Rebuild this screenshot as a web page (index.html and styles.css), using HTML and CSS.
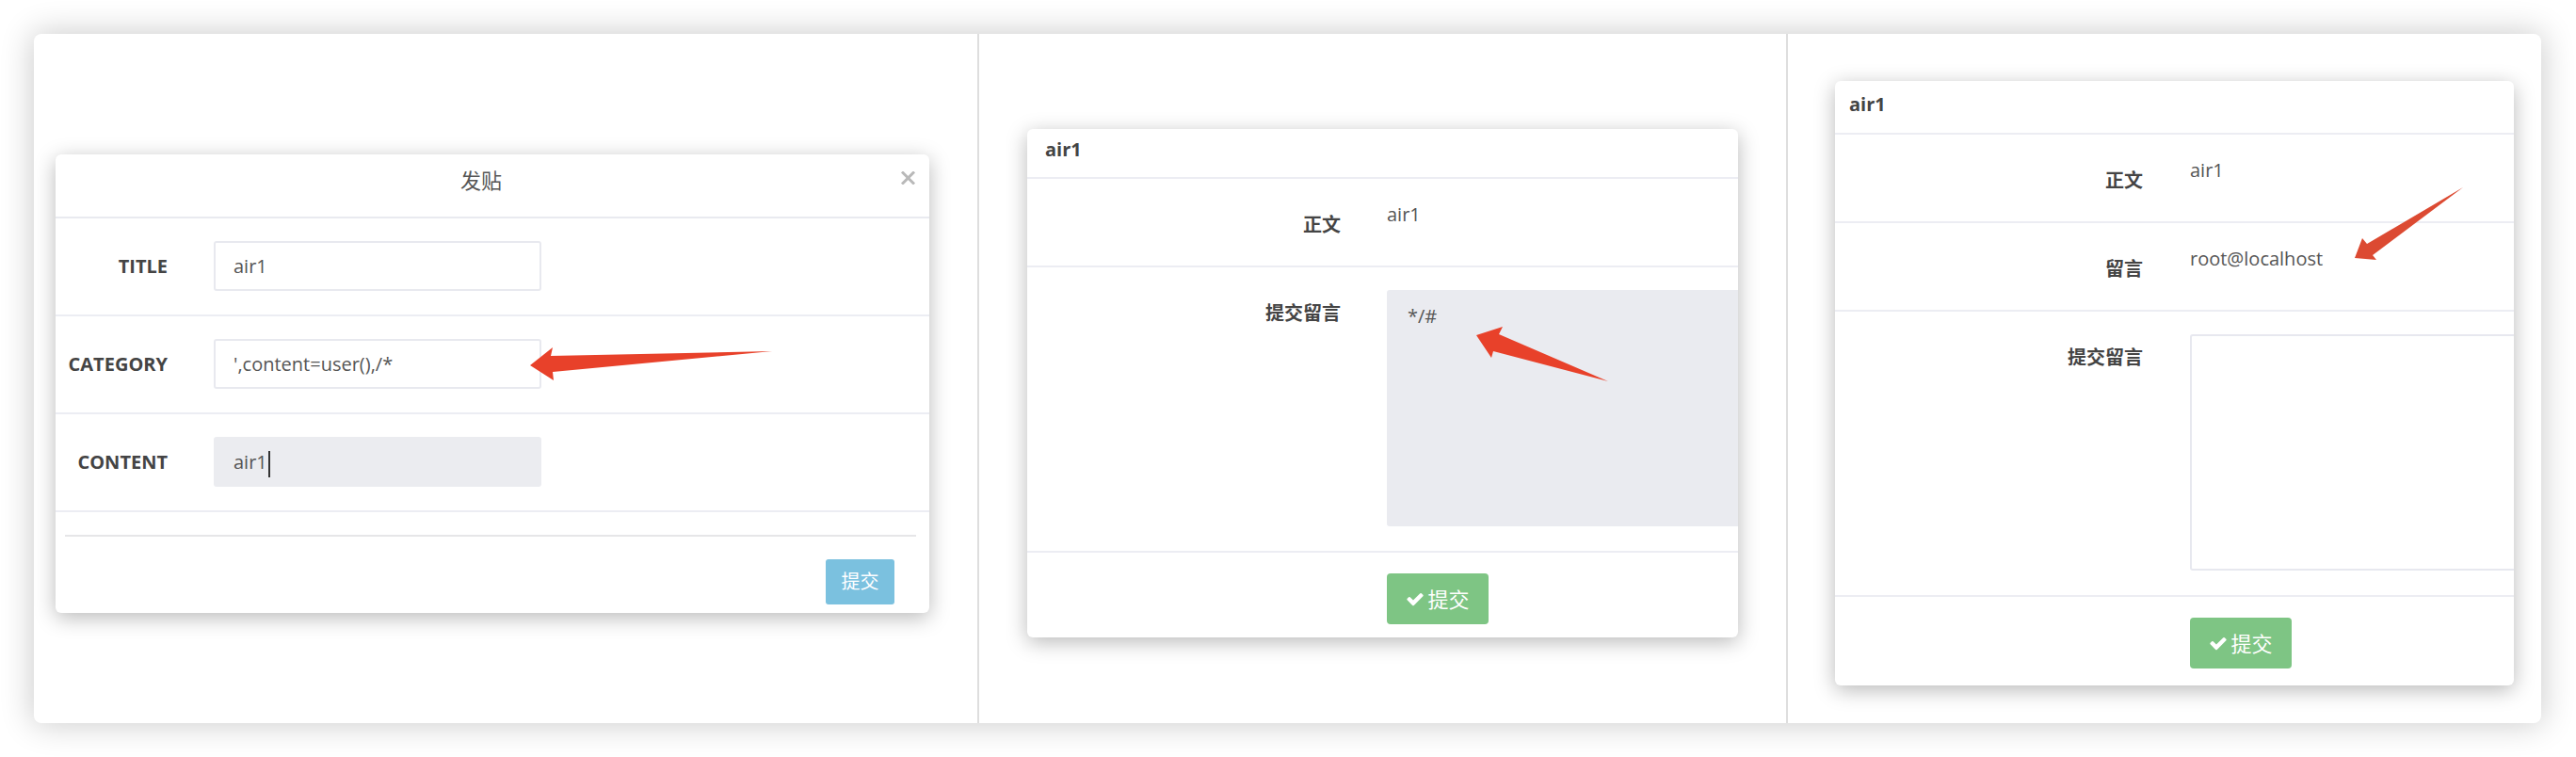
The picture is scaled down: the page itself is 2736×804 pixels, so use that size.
FILE: index.html
```html
<!DOCTYPE html>
<html lang="zh">
<head>
<meta charset="utf-8">
<title>screens</title>
<link rel="stylesheet" href="styles.css">
</head>
<body>
<div class="card">
  <div class="panel p1">
    <div class="modal m1">
      <div class="m1-head">
        <span class="m1-title">发贴</span>
        <svg class="close" width="15" height="14" viewBox="0 0 15 14"><path d="M2 1.5 L13 12.5 M13 1.5 L2 12.5" stroke="#b9b9b9" stroke-width="3" stroke-linecap="square"/></svg>
      </div>
      <div class="frow"><div class="flabel">TITLE</div><div class="inp">air1</div></div>
      <div class="frow"><div class="flabel">CATEGORY</div><div class="inp">',content=user(),/*</div></div>
      <div class="frow"><div class="flabel">CONTENT</div><div class="inp inp-focus">air1<span class="caret"></span></div></div>
      <div class="m1-sep"></div>
      <div class="m1-foot"><div class="btn-info">提交</div></div>
    </div>
  </div>
  <div class="panel p2">
    <div class="modal m2">
      <div class="dhead">air1</div>
      <div class="drow"><div class="dlabel">正文</div><div class="dval">air1</div></div>
      <div class="drow"><div class="dlabel">提交留言</div><div class="dval"><div class="tarea tarea-gray">*/#</div></div></div>
      <div class="dfoot">
        <div class="btn-ok"><svg class="chk" width="20" height="17" viewBox="0 220 1792 1400"><path fill="#fff" d="M1671 566q0 40-28 68l-724 724-136 136q-28 28-68 28t-68-28l-136-136-362-362q-28-28-28-68t28-68l136-136q28-28 68-28t68 28l294 295 656-657q28-28 68-28t68 28l136 136q28 28 28 68z"/></svg>提交</div>
      </div>
    </div>
  </div>
  <div class="panel p3">
    <div class="modal m3">
      <div class="dhead">air1</div>
      <div class="drow"><div class="dlabel">正文</div><div class="dval">air1</div></div>
      <div class="drow"><div class="dlabel">留言</div><div class="dval">root@localhost</div></div>
      <div class="drow"><div class="dlabel">提交留言</div><div class="dval"><div class="tarea tarea-white"></div></div></div>
      <div class="dfoot">
        <div class="btn-ok"><svg class="chk" width="20" height="17" viewBox="0 220 1792 1400"><path fill="#fff" d="M1671 566q0 40-28 68l-724 724-136 136q-28 28-68 28t-68-28l-136-136-362-362q-28-28-28-68t28-68l136-136q28-28 68-28t68 28l294 295 656-657q28-28 68-28t68 28l136 136q28 28 28 68z"/></svg>提交</div>
      </div>
    </div>
  </div>
</div>
<svg class="annot" width="2736" height="804" viewBox="0 0 2736 804">
  <polygon fill="#e8412a" points="563,388 587,369 585,378 820,373 587,395 588,404"/>
  <polygon fill="#e8412a" points="1568,356 1596,347 1592,355 1708,405 1586,373 1584,380"/>
  <polygon fill="#dc4a32" points="2616,199 2514,259 2509,253 2501,274 2524,276 2520,271"/>
</svg>
</body>
</html>
```

FILE: styles.css
```css
html, body {
  margin: 0;
  padding: 0;
  background: #ffffff;
}
body {
  position: relative;
  width: 2736px;
  height: 804px;
  overflow: hidden;
  font-family: "Open Sans", "Noto Sans CJK SC", sans-serif;
  color: #555;
}
.card {
  margin: 36px 0 0 36px;
  width: 2663px;
  height: 732px;
  background: #fff;
  border-radius: 8px;
  box-shadow: 0 0 34px 2px rgba(0, 0, 0, 0.2);
  display: flex;
  overflow: hidden;
}
.panel {
  box-sizing: border-box;
  height: 100%;
  overflow: hidden;
}
.p1 {
  width: 1004px;
  border-right: 2px solid #dedede;
  padding: 128px 0 0 23px;
}
.p2 {
  width: 859px;
  border-right: 2px solid #dedede;
  padding: 101px 0 0 51px;
}
.p3 {
  width: 800px;
  padding: 50px 0 0 50px;
}
.modal {
  background: #fff;
  border-radius: 6px;
  box-shadow: 0 5px 22px rgba(0, 0, 0, 0.28);
  overflow: hidden;
}
.m1 { width: 928px; }
.m2 { width: 755px; }
.m3 { width: 721px; }

/* modal 1 */
.m1-head {
  display: flex;
  align-items: flex-start;
  height: 68px;
  box-sizing: border-box;
  padding: 0 15px 0 6px;
  border-bottom: 2px solid #e9eaf0;
}
.m1-title {
  flex: 1;
  text-align: center;
  font-size: 22px;
  line-height: 30px;
  padding-top: 12px;
  color: #555;
}
.close {
  margin-top: 18px;
}
.frow {
  display: flex;
  align-items: center;
  padding: 24px 0 25px;
  border-bottom: 2px solid #ecedf3;
}
.flabel {
  width: 119px;
  margin-right: 49px;
  text-align: right;
  font-weight: 700;
  font-size: 20px;
  color: #444;
}
.inp {
  width: 348px;
  height: 53px;
  box-sizing: border-box;
  border: 2px solid #e8e9ef;
  border-radius: 3px;
  padding-left: 19px;
  font-size: 20px;
  line-height: 49px;
  color: #555;
  background: #fff;
}
.inp-focus {
  background: #ebecf0;
  border-color: #ebecf0;
}
.caret {
  display: inline-block;
  width: 2px;
  height: 28px;
  background: #333;
  vertical-align: middle;
  margin-left: 1px;
}
.m1-sep {
  margin: 24px 14px 0 10px;
  height: 2px;
  background: #e6e6e8;
}
.m1-foot {
  display: flex;
  justify-content: flex-end;
  padding: 24px 37px 9px 0;
}
.btn-info {
  width: 73px;
  height: 48px;
  box-sizing: border-box;
  background: #7bc1df;
  border-radius: 3px;
  color: #fff;
  font-size: 20px;
  line-height: 48px;
  text-align: center;
}

/* modal 2 / 3 */
.dhead {
  font-weight: 700;
  font-size: 20px;
  line-height: 28px;
  color: #444;
  border-bottom: 2px solid #ecedf3;
}
.m2 .dhead { padding: 8px 19px 15px; }
.m3 .dhead { padding: 11px 15px 16px; }
.drow {
  display: flex;
  align-items: flex-start;
  padding: 24px 0 26px;
  border-bottom: 2px solid #ecedf3;
}
.dlabel {
  flex: none;
  text-align: right;
  font-weight: 700;
  font-size: 20px;
  line-height: 28px;
  padding: 11px 0 3px;
  color: #444;
}
.m2 .dlabel { width: 333px; margin-right: 49px; }
.m3 .dlabel { width: 327px; margin-right: 50px; }
.dval {
  flex: none;
  font-size: 20px;
  line-height: 28px;
  color: #555;
}
.tarea {
  width: 600px;
  height: 251px;
  box-sizing: border-box;
  border-radius: 3px;
  padding: 12px 20px;
  font-size: 20px;
  line-height: 28px;
  color: #555;
}
.tarea-gray {
  background: #eaebf0;
  border: 2px solid #eaebf0;
}
.tarea-white {
  background: #fff;
  border: 2px solid #e7e8ef;
}
.dfoot {
  padding: 22px 0 16px;
}
.m2 .dfoot { padding-left: 382px; padding-bottom: 14px; }
.m3 .dfoot { padding-left: 377px; padding-bottom: 18px; }
.btn-ok {
  width: 108px;
  height: 54px;
  box-sizing: border-box;
  background: #7ec584;
  border-radius: 4px;
  color: #fff;
  font-size: 22px;
  line-height: 54px;
  display: flex;
  align-items: center;
  justify-content: center;
  gap: 3px;
}
.chk {
  display: block;
}
.annot {
  position: absolute;
  left: 0;
  top: 0;
  pointer-events: none;
}
```
